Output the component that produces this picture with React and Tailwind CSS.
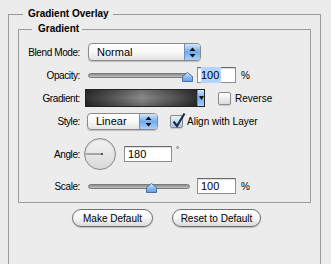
import React from 'react';

const font = { fontFamily: '"Lucida Grande", "Liberation Sans", Arial, sans-serif' };

function Arrows() {
  return (
    <svg width="7" height="11" viewBox="0 0 7 11">
      <path d="M3.5 0.5 L6.5 4 L0.5 4 Z" fill="#111" />
      <path d="M3.5 10.5 L6.5 7 L0.5 7 Z" fill="#111" />
    </svg>
  );
}

function PopUp({ label, width, btn }) {
  return (
    <div
      className={`flex h-full items-stretch overflow-hidden rounded-[4px] border border-[#8a8a8a] bg-gradient-to-b from-white via-[#f8f8f8] to-[#e3e3e3] shadow-[0_1px_1px_rgba(0,0,0,0.2)] ${width}`}
    >
      <span className="flex flex-1 items-center pl-[8px] text-[11px] text-black">{label}</span>
      <span
        className={`flex items-center justify-center border-l border-[#6f8fb8] bg-gradient-to-b from-[#d3e6fb] via-[#71abeb] to-[#a9d0f7] ${btn}`}
      >
        <Arrows />
      </span>
    </div>
  );
}

function Thumb() {
  return (
    <svg width="11" height="10" viewBox="0 0 11 10">
      <defs>
        <linearGradient id="th" x1="0" y1="0" x2="0" y2="1">
          <stop offset="0" stopColor="#e4f1fd" />
          <stop offset="0.5" stopColor="#8cbdf0" />
          <stop offset="1" stopColor="#5a9ee6" />
        </linearGradient>
      </defs>
      <path d="M0.5 4.5 L5.5 0.5 L10.5 4.5 L10.5 9.5 L0.5 9.5 Z" fill="url(#th)" stroke="#4d6f9a" />
    </svg>
  );
}

function Slider({ width, pos }) {
  return (
    <div className={`relative flex h-full items-center ${width}`}>
      <div className="h-[5px] w-full rounded-full border border-[#7a7a7a] bg-gradient-to-b from-[#8c8c8c] to-[#c2c2c2]" />
      <div className="absolute top-[5px]" style={{ left: pos }}>
        <Thumb />
      </div>
    </div>
  );
}

function Field({ value, width, selected }) {
  return (
    <div
      className={`flex h-[16px] items-center border border-[#8e8e8e] border-t-[#6a6a6a] bg-white pl-[3px] text-[11px] text-black shadow-[inset_0_1px_1px_rgba(0,0,0,0.15)] ${width}`}
    >
      <span className={selected ? 'bg-[#b5d5ff] pr-[2px]' : ''}>{value}</span>
    </div>
  );
}

function Check({ checked }) {
  return (
    <div
      className={`relative h-[13px] w-[13px] rounded-[2px] border border-[#8a8a8a] bg-gradient-to-b shadow-[0_1px_1px_rgba(0,0,0,0.15)] ${
        checked ? 'from-[#e6f1fc] to-[#a9cbef]' : 'from-white to-[#dcdcdc]'
      }`}
    >
      {checked && (
        <svg className="absolute -top-[4px] left-[1px]" width="14" height="16" viewBox="0 0 14 16">
          <path d="M1.5 9.5 L5 14 L12.5 1.5" fill="none" stroke="#1d2f4a" strokeWidth="2.2" />
        </svg>
      )}
    </div>
  );
}

function Label({ children, w = 'w-[61px]' }) {
  return <span className={`${w} shrink-0 text-right text-[10px] tracking-[-0.4px] text-black`}>{children}</span>;
}

function Button({ children, width }) {
  return (
    <button
      className={`flex h-[18px] items-center justify-center rounded-full border border-[#6e6e6e] bg-gradient-to-b from-white via-[#f6f6f6] to-[#dadada] text-[10px] text-black shadow-[0_1px_1px_rgba(0,0,0,0.2)] ${width}`}
    >
      {children}
    </button>
  );
}

export default function App() {
  return (
    <div className="h-[264px] w-[331px] overflow-hidden bg-[#ececec] px-[8px] pt-[7px]" style={font}>
      <fieldset className="h-[270px] w-[313px] border border-b-0 border-[#9a9a9a]">
        <legend className="ml-[14px] pl-[5px] pr-[4px] text-[10px] font-bold leading-[14px] text-black">
          Gradient Overlay
        </legend>

        <fieldset className="ml-[9px] mt-[1px] w-[293px] border border-[#9a9a9a] pb-[8px] pt-[7px]">
          <legend className="ml-[13px] pl-[6px] pr-[3px] text-[10px] font-bold leading-[14px] text-black">
            Gradient
          </legend>

          <div className="flex h-[18px] items-center gap-[8px]">
            <Label>Blend Mode:</Label>
            <PopUp label="Normal" width="w-[113px]" btn="w-[16px]" />
          </div>

          <div className="mt-[6px] flex h-[16px] items-center">
            <Label>Opacity:</Label>
            <div className="ml-[8px] h-full">
              <Slider width="w-[102px]" pos="94px" />
            </div>
            <div className="ml-[7px]">
              <Field value="100" width="w-[39px]" selected />
            </div>
            <span className="ml-[5px] text-[10px]">%</span>
          </div>

          <div className="mt-[6px] flex h-[18px] items-center">
            <Label>Gradient:</Label>
            <div className="ml-[5px] flex h-full w-[120px] border border-[#222]">
              <div className="relative flex-1 bg-[linear-gradient(to_right,#2f2f2f,#5a5a5a_25%,#8a8a8a_50%,#5a5a5a_78%,#2f2f2f)]">
                <div className="h-full w-full bg-gradient-to-b from-black/20 via-transparent to-black/25" />
              </div>
              <div className="flex w-[7px] items-center justify-center border-l border-[#6f8fb8] bg-gradient-to-b from-[#d3e6fb] via-[#71abeb] to-[#a9d0f7]">
                <svg width="5" height="4" viewBox="0 0 5 4">
                  <path d="M0 0 L5 0 L2.5 4 Z" fill="#111" />
                </svg>
              </div>
            </div>
            <div className="ml-[13px]">
              <Check />
            </div>
            <span className="ml-[4px] text-[10px]">Reverse</span>
          </div>

          <div className="mt-[6px] flex h-[17px] items-center">
            <Label>Style:</Label>
            <div className="ml-[7px] h-full">
              <PopUp label="Linear" width="w-[71px]" btn="w-[18px]" />
            </div>
            <div className="ml-[12px]">
              <Check checked />
            </div>
            <span className="ml-[4px] text-[10px]">Align with Layer</span>
          </div>

          <div className="mt-[8px] flex h-[32px] items-center">
            <Label>Angle:</Label>
            <div className="relative ml-[4px] h-[32px] w-[32px] rounded-full border border-[#8a8a8a] bg-gradient-to-b from-[#f4f4f4] to-[#d9d9d9] shadow-[inset_0_1px_2px_rgba(0,0,0,0.15)]">
              <svg className="absolute left-0 top-0" width="30" height="30" viewBox="0 0 30 30">
                <line x1="0.5" y1="15" x2="17" y2="15" stroke="#666" strokeWidth="1" />
                <rect x="16" y="14" width="2" height="2" fill="#555" />
              </svg>
            </div>
            <div className="ml-[8px]">
              <Field value="180" width="w-[48px]" />
            </div>
            <span className="mb-[8px] ml-[4px] text-[8px]">°</span>
          </div>

          <div className="mt-[8px] flex h-[16px] items-center">
            <Label>Scale:</Label>
            <div className="ml-[8px] h-full">
              <Slider width="w-[102px]" pos="58px" />
            </div>
            <div className="ml-[7px]">
              <Field value="100" width="w-[39px]" />
            </div>
            <span className="ml-[5px] text-[10px]">%</span>
          </div>
        </fieldset>

        <div className="ml-[63px] mt-[6px] flex gap-[19px]">
          <Button width="w-[81px]">Make Default</Button>
          <Button width="w-[89px]">Reset to Default</Button>
        </div>
      </fieldset>
    </div>
  );
}
